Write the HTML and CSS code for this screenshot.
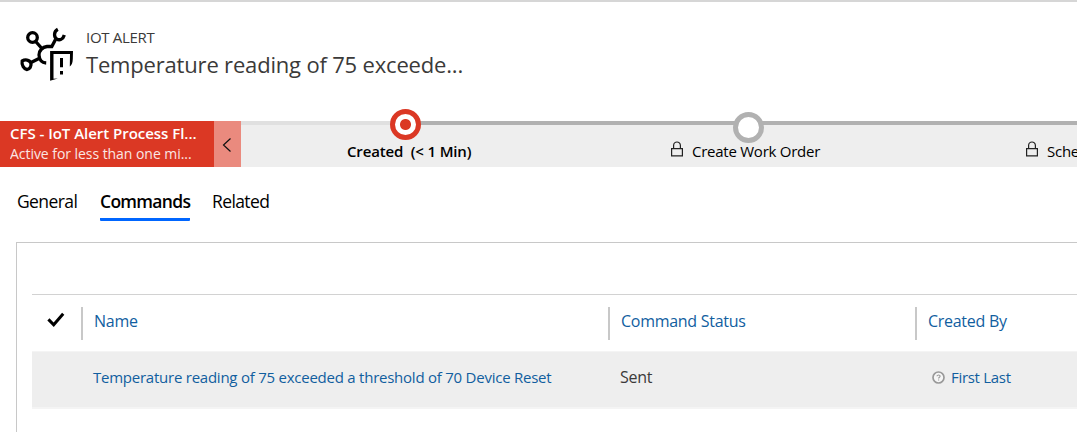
FILE: index.html
```html
<!DOCTYPE html>
<html lang="en">
<head>
<meta charset="utf-8">
<title>IoT Alert</title>
<link rel="stylesheet" href="styles.css">
</head>
<body>
<header class="record">
  <svg class="record-icon" width="56" height="56" viewBox="0 0 56 56" fill="none" stroke="#000">
    <g stroke-width="3.3">
      <circle cx="13.500" cy="10.500" r="4.800"/>
      <path d="M38.800 2.300C34.600 4.500 34.800 9.500 37.500 11.800C40.500 13.900 44 12.500 45.300 8"/>
      <path d="M3.200 34C6 32.200 10.500 32.500 11.800 36C12.800 39.200 10.600 42.500 8 42.500C5 42 2.400 38.200 3.200 34Z"/>
      <path d="M16.700 14.500L22 20.500M12 35.500L20 31.500M36.500 12.500L32.800 19.500H28C23.500 20 20 23.500 20 28C20.300 32.500 22.500 35.700 27.200 36"/>
    </g>
    <path fill="#000" stroke="none" d="M31.100 24H54L53.800 32C53.600 36 52.800 38 50.800 39.500L51 27H34.500V51.800L38.800 51.500L31.100 53.800Z"/>
    <path stroke-width="3" d="M42.500 31V40.300M42.500 44V47.500"/>
  </svg>
  <div class="record-text">
    <div class="record-type">IOT ALERT</div>
    <h1 class="record-title">Temperature reading of 75 exceede...</h1>
  </div>
</header>

<section class="process">
  <div class="process-name">
    <div class="process-title">CFS - IoT Alert Process Fl...</div>
    <div class="process-duration">Active for less than one mi...</div>
  </div>
  <button class="process-collapse" aria-label="Collapse">
    <svg width="10" height="16" viewBox="0 0 10 16" fill="none" stroke="#111" stroke-width="1.2"><path d="M8.500 1.500L1.500 8L8.500 14.500"/></svg>
  </button>
  <div class="stages">
    <div class="stage stage-active">
      <span class="marker"></span>
      <span class="stage-label">Created&nbsp; (&lt; 1 Min)</span>
    </div>
    <div class="stage">
      <span class="marker"></span>
      <svg class="lock" width="14" height="16" viewBox="0 0 14 16" fill="none" stroke="#222" stroke-width="1.2"><path d="M1.600 7.600H12.400V14.900H1.600ZM3.600 7.500V4.500C3.600 -.2 10.400 -.2 10.400 4.500V7.500"/></svg>
      <span class="stage-label">Create Work Order</span>
    </div>
    <div class="stage stage-last">
      <svg class="lock" width="14" height="16" viewBox="0 0 14 16" fill="none" stroke="#222" stroke-width="1.2"><path d="M1.600 7.600H12.400V14.900H1.600ZM3.600 7.500V4.500C3.600 -.2 10.400 -.2 10.400 4.500V7.500"/></svg>
      <span class="stage-label">Sche</span>
    </div>
  </div>
</section>

<nav class="tabs">
  <a class="tab tab-general">General</a>
  <a class="tab tab-selected">Commands</a>
  <a class="tab tab-related">Related</a>
</nav>

<main class="panel">
  <div class="grid">
    <div class="grid-row grid-head">
      <div class="check"><svg width="18" height="16" viewBox="0 0 18 16" fill="none" stroke="#000" stroke-width="3"><path d="M1.400 7.400L6.700 12.800L16.200 1.800"/></svg></div>
      <div class="head-cell head-name">Name</div>
      <div class="head-cell head-status">Command Status</div>
      <div class="head-cell head-creator">Created By</div>
    </div>
    <div class="grid-row grid-record">
      <div class="check"></div>
      <div class="cell cell-name">Temperature reading of 75 exceeded a threshold of 70 Device Reset</div>
      <div class="cell cell-status">Sent</div>
      <div class="cell cell-creator">
        <svg width="13" height="13" viewBox="0 0 13 13" fill="none" stroke="#999"><circle cx="6.500" cy="6.500" r="5.500" stroke-width="1.700" fill="#f6f6f6"/><path stroke-width="1.100" d="M5 5.300C5 3.600 8.200 3.700 8.100 5.300C8 6.400 6.600 6.200 6.600 7.600M6.600 8.400V9.500"/></svg>
        <span>First Last</span>
      </div>
    </div>
  </div>
</main>
</body>
</html>
```
FILE: styles.css
```css
* { box-sizing: border-box; }

body {
  margin: 0;
  height: 432px;
  overflow: hidden;
  display: flex;
  flex-direction: column;
  background: #fff;
  border-top: 2px solid #d6d6d6;
  font-family: "Open Sans", "Noto Sans", sans-serif;
  color: #000;
}

.record {
  display: flex;
  flex: none;
  gap: 11px;
  height: 119px;
  padding: 25px 0 0 19px;
}
.record-icon { flex: none; }
.record-text { white-space: nowrap; color: #3b3a39; }
.record-type { font-size: 15px; line-height: 20px; letter-spacing: -0.3px; }
.record-title {
  margin: 2px 0 0;
  font-size: 22px;
  line-height: 30px;
  font-weight: 400;
  letter-spacing: -0.18px;
}

.process { display: flex; height: 46px; flex: none; }
.process-name {
  flex: none;
  width: 214px;
  padding: 2px 0 0 10px;
  background: #db3824;
  color: #fff;
  white-space: nowrap;
}
.process-title { font-size: 15px; line-height: 20px; font-weight: 600; letter-spacing: -0.03px; }
.process-duration { margin-top: 1px; font-size: 14px; line-height: 20px; letter-spacing: -0.05px; opacity: .88; }
.process-collapse {
  display: flex;
  flex: none;
  align-items: center;
  justify-content: center;
  width: 27px;
  padding: 1px 2px 0 0;
  border: 0;
  background: #ea8a7e;
}
.stages {
  flex: 1;
  min-width: 0;
  display: flex;
  background: linear-gradient(90deg, #e0e0e0 164px, #b1b1b1 164px) 0 0 / 100% 4px no-repeat #eee;
}
.stage {
  position: relative;
  display: flex;
  flex: none;
  gap: 8px;
  width: 343px;
  height: 46px;
  padding: 20px 0 0 86px;
  white-space: nowrap;
  font-size: 15px;
  line-height: 20px;
  letter-spacing: -0.25px;
}
.stage-active { padding-left: 106px; font-weight: 600; letter-spacing: -0.15px; }
.stage-last { width: 150px; padding-left: 98px; }
.marker {
  position: absolute;
  left: 149px;
  top: -9px;
  width: 31px;
  height: 31px;
  border: 5px solid #b1b1b1;
  border-radius: 50%;
  background: #fff;
}
.stage-active .marker {
  top: -12px;
  border-color: #db3824;
  background: radial-gradient(circle, #db3824 5px, #fff 6px);
}
.lock { flex: none; }

.tabs { display: flex; height: 75px; padding: 21px 0 0 17px; flex: none; }
.tab { height: 33px; font-size: 17.5px; line-height: 26px; letter-spacing: -0.6px; white-space: nowrap; }
.tab-general { width: 60px; margin-right: 23px; }
.tab-selected {
  width: 90px;
  margin-right: 22px;
  font-weight: 600;
  letter-spacing: -0.7px;
  border-bottom: 3px solid #0066ff;
  border-radius: 1px;
}

.panel {
  flex: 1;
  margin-left: 16px;
  padding: 51px 0 0 15px;
  border: solid #c8c8c8;
  border-width: 1px 0 0 1px;
}
.grid { border-top: 1px solid #d2d2d2; }
.grid-row {
  display: grid;
  grid-template-columns: 49px 527px 307px 1fr;
  white-space: nowrap;
}
.grid-head { height: 56px; padding-top: 12px; color: #115e9f; font-size: 16px; letter-spacing: -0.28px; }
.head-cell {
  height: 33px;
  padding-left: 11px;
  border-left: 2px solid #c8c8c8;
  line-height: 28px;
}
.check { padding: 4px 0 0 15px; }
.grid-record {
  height: 58px;
  background: #eee;
  border: solid #f4f4f4;
  border-width: 1px 0 2px;
  color: #115e9f;
  font-size: 15px;
  line-height: 50px;
  letter-spacing: -0.24px;
}
.cell-name { padding-left: 12px; }
.cell-status { padding-left: 12px; color: #3b3a39; font-size: 16px; }
.cell-creator { display: flex; align-items: center; gap: 6px; padding-left: 17px; height: 50px; letter-spacing: -0.3px; }
```
